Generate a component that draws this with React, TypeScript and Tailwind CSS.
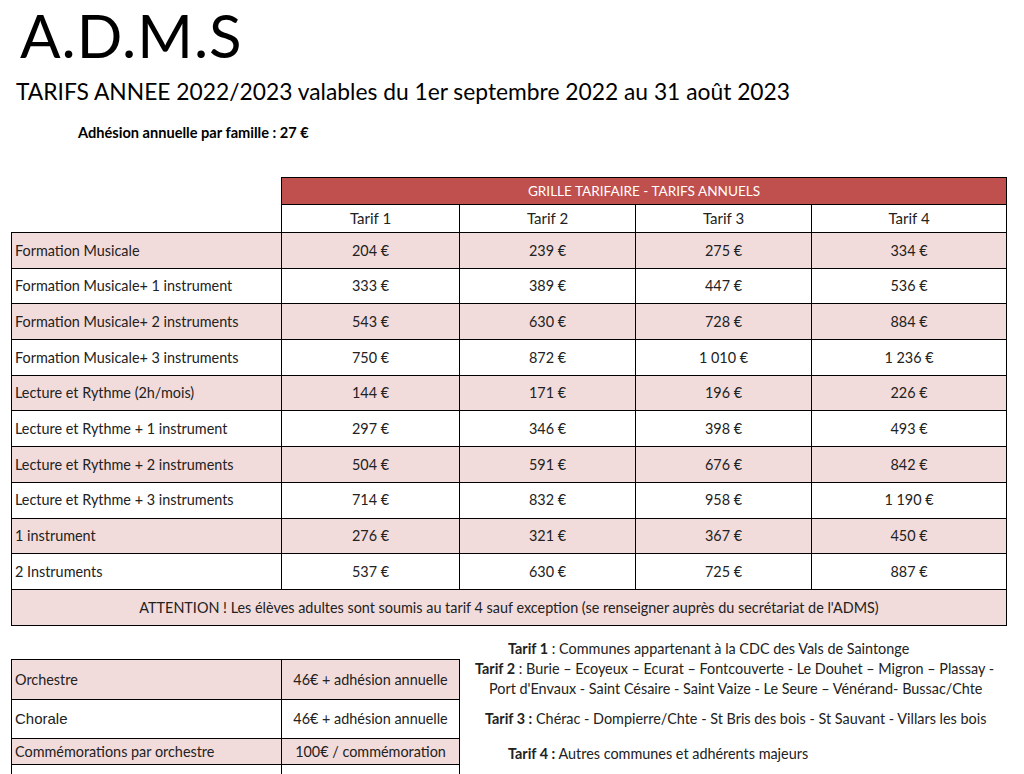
import React from "react";

const rows: [string, string, string, string, string][] = [
  ["Formation Musicale", "204 €", "239 €", "275 €", "334 €"],
  ["Formation Musicale+ 1 instrument", "333 €", "389 €", "447 €", "536 €"],
  ["Formation Musicale+ 2 instruments", "543 €", "630 €", "728 €", "884 €"],
  ["Formation Musicale+ 3 instruments", "750 €", "872 €", "1 010 €", "1 236 €"],
  ["Lecture et Rythme (2h/mois)", "144 €", "171 €", "196 €", "226 €"],
  ["Lecture et Rythme + 1 instrument", "297 €", "346 €", "398 €", "493 €"],
  ["Lecture et Rythme + 2 instruments", "504 €", "591 €", "676 €", "842 €"],
  ["Lecture et Rythme + 3 instruments", "714 €", "832 €", "958 €", "1 190 €"],
  ["1 instrument", "276 €", "321 €", "367 €", "450 €"],
  ["2 Instruments", "537 €", "630 €", "725 €", "887 €"],
];

export default function App() {
  return (
    <div
      className="w-[1024px] h-[774px] overflow-hidden bg-white text-black"
      style={{ fontFamily: "Lato, 'Open Sans', sans-serif" }}
    >
      <div className="pl-[20px] pt-[0px] text-[60px] leading-[70px] tracking-[1px]">A.D.M.S</div>
      <div className="pl-[16px] mt-[6px] text-[22.8px] leading-[30px]">
        TARIFS ANNEE 2022/2023 valables du 1er septembre 2022 au 31 août 2023
      </div>
      <div className="pl-[78px] mt-[19px] text-[14.6px] leading-[16px] font-bold">
        Adhésion annuelle par famille : 27 €
      </div>

      <table className="ml-[11px] mt-[36px] border-collapse text-[14.4px] text-[#222] table-fixed w-[995px]">
        <colgroup>
          <col className="w-[270px]" />
          <col className="w-[178px]" />
          <col className="w-[176px]" />
          <col className="w-[176px]" />
          <col className="w-[195px]" />
        </colgroup>
        <tbody>
          <tr className="h-[27px]">
            <td rowSpan={2} className="border-r border-black p-0"></td>
            <td colSpan={4} className="bg-[#c0504d] text-white text-center border border-black p-0 text-[13.6px]">
              GRILLE TARIFAIRE - TARIFS ANNUELS
            </td>
          </tr>
          <tr className="h-[28px]">
            {["Tarif 1", "Tarif 2", "Tarif 3", "Tarif 4"].map((t) => (
              <td key={t} className="text-center border border-black p-0 text-[15px]">
                {t}
              </td>
            ))}
          </tr>
          {rows.map((r, i) => (
            <tr key={r[0]} className={`h-[35.7px] ${i % 2 === 0 ? "bg-[#f2dcdb]" : "bg-white"}`}>
              <td className="border border-black pl-[3px] py-0">{r[0]}</td>
              {r.slice(1).map((v, j) => (
                <td key={j} className="border border-black text-center p-0">
                  {v}
                </td>
              ))}
            </tr>
          ))}
          <tr className="h-[36px] bg-[#f2dcdb]">
            <td colSpan={5} className="border border-black text-center p-0">
              ATTENTION ! Les élèves adultes sont soumis au tarif 4 sauf exception (se renseigner auprès du secrétariat de l'ADMS)
            </td>
          </tr>
        </tbody>
      </table>

      <div className="flex mt-[13px]">
        <div className="pl-[11px] pt-[20px]">
          <table className="border-collapse text-[14.4px] text-[#222] table-fixed w-[448px]">
            <colgroup>
              <col className="w-[270px]" />
              <col className="w-[178px]" />
            </colgroup>
            <tbody>
              <tr className="h-[40px] bg-[#f2dcdb]">
                <td className="border border-black pl-[3px] py-0">Orchestre</td>
                <td className="border border-black text-center p-0">46€ + adhésion annuelle</td>
              </tr>
              <tr className="h-[39px] bg-white">
                <td className="border border-black pl-[3px] py-0 text-[15px]" style={{ fontFamily: "'Liberation Sans', Arial, sans-serif" }}>
                  Chorale
                </td>
                <td className="border border-black text-center p-0">46€ + adhésion annuelle</td>
              </tr>
              <tr className="h-[26px] bg-[#f2dcdb]">
                <td className="border border-black pl-[3px] py-0">Commémorations par orchestre</td>
                <td className="border border-black text-center p-0">100€ / commémoration</td>
              </tr>
              <tr className="h-[30px] bg-white">
                <td className="border border-black p-0"></td>
                <td className="border border-black p-0"></td>
              </tr>
            </tbody>
          </table>
        </div>
        <div className="flex-1 text-[14.4px] text-[#222] leading-[20px]">
          <div className="pl-[48px]">
            <b>Tarif 1</b> : Communes appartenant à la CDC des Vals de Saintonge
          </div>
          <div className="pl-[15px]">
            <b>Tarif 2</b> : Burie – Ecoyeux – Ecurat – Fontcouverte - Le Douhet – Migron – Plassay -
          </div>
          <div className="pl-[29px]">
            Port d'Envaux - Saint Césaire - Saint Vaize - Le Seure – Vénérand- Bussac/Chte
          </div>
          <div className="pl-[25px] mt-[10px]">
            <b>Tarif 3 :</b> Chérac - Dompierre/Chte - St Bris des bois - St Sauvant - Villars les bois
          </div>
          <div className="pl-[48px] mt-[15px]">
            <b>Tarif 4 :</b> Autres communes et adhérents majeurs
          </div>
        </div>
      </div>
    </div>
  );
}
